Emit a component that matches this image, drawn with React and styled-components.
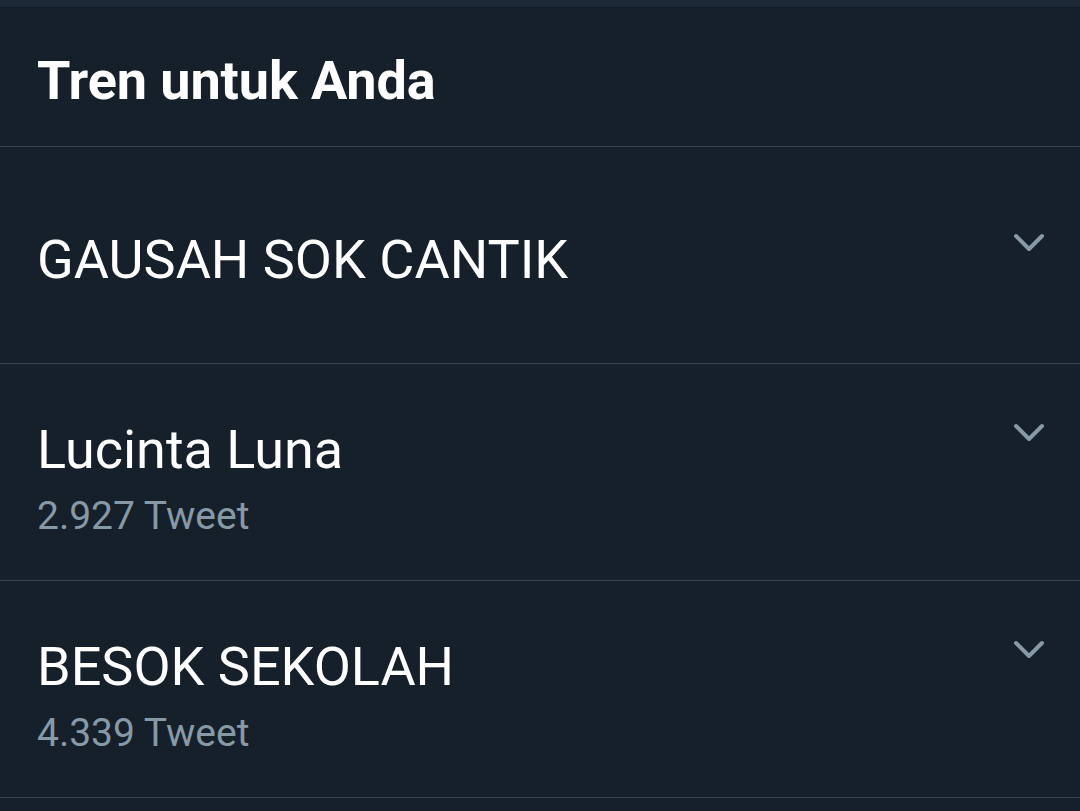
import styled, { createGlobalStyle } from 'styled-components';

const GlobalStyle = createGlobalStyle`
  html, body {
    margin: 0;
    padding: 0;
    background: #15202b;
  }
  body {
    font-family: Roboto, "Noto Sans", "Liberation Sans", sans-serif;
    -webkit-font-smoothing: antialiased;
  }
`;

const trends = [
	{name: 'GAUSAH SOK CANTIK'},
	{name: 'Lucinta Luna', count: '2.927 Tweet'},
	{name: 'BESOK SEKOLAH', count: '4.339 Tweet'}
];

const Chevron = () => (
	<svg width="34" height="22" viewBox="0 0 34 22">
		<polyline
			points="4,5 17,18 30,5"
			fill="none"
			stroke="#8899a6"
			strokeWidth="4"
			strokeLinecap="round"
			strokeLinejoin="round"
		/>
	</svg>
);

const TrendRow = ({name, count}) => (
	<Row single={!count}>
		<Content>
			<Title>{name}</Title>
			{count && <Count>{count}</Count>}
		</Content>
		<Caret>
			<Chevron/>
		</Caret>
	</Row>
);

const App = () => (
	<>
		<GlobalStyle/>
		<Page>
			<TopBar/>
			<Header>
				<Heading>Tren untuk Anda</Heading>
			</Header>
			{trends.map(t => (
				<TrendRow key={t.name} name={t.name} count={t.count}/>
			))}
		</Page>
	</>
);

export default App;

const Page = styled.div`
  width: 1080px;
  height: 811px;
  overflow: hidden;
  background: #15202b;
  color: #ffffff;
`;

const TopBar = styled.div`
  height: 7px;
  background: #1c2a38;
  border-bottom: 1px solid #121a23;
`;

const Header = styled.div`
  height: 139px;
  box-sizing: border-box;
  display: flex;
  align-items: center;
  padding: 6px 37px 0;
  border-bottom: 1px solid #38444d;
`;

const Heading = styled.h2`
  margin: 0;
  font-size: 54px;
  font-weight: 700;
  letter-spacing: -0.1px;
  color: #ffffff;
`;

const Row = styled.div`
  height: 217px;
  box-sizing: border-box;
  display: flex;
  align-items: flex-start;
  padding: ${({single}) => (single ? '80px' : '53px')} 34px 0 37px;
  border-bottom: 1px solid #38444d;
`;

const Content = styled.div`
  flex: 1;
  display: flex;
  flex-direction: column;
`;

const Title = styled.div`
  font-size: 54px;
  line-height: 66px;
  font-weight: 400;
  color: #ffffff;
`;

const Count = styled.div`
  margin-top: 8px;
  font-size: 39px;
  line-height: 50px;
  color: #8899a6;
`;

const Caret = styled.div`
  display: flex;
  margin-top: 4px;
`;
